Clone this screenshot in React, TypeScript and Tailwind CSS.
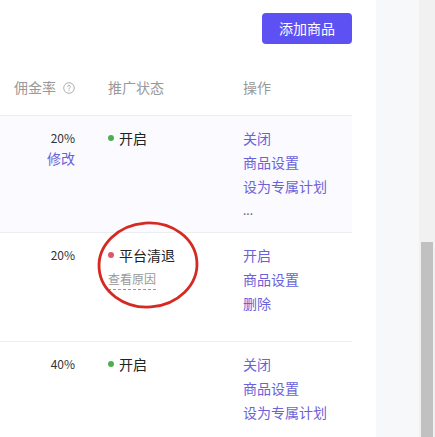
import React from 'react';

type Op = { label: string; muted?: boolean };

interface RowData {
  rate: string;
  editable?: boolean;
  status: 'on' | 'cleared';
  ops: Op[];
  highlight?: boolean;
  minH: string;
}

const rows: RowData[] = [
  {
    rate: '20%',
    editable: true,
    status: 'on',
    highlight: true,
    minH: 'min-h-[116px]',
    ops: [{ label: '关闭' }, { label: '商品设置' }, { label: '设为专属计划' }, { label: '...', muted: true }],
  },
  {
    rate: '20%',
    status: 'cleared',
    minH: 'min-h-[109px]',
    ops: [{ label: '开启' }, { label: '商品设置' }, { label: '删除' }],
  },
  {
    rate: '40%',
    status: 'on',
    minH: 'min-h-[109px]',
    ops: [{ label: '关闭' }, { label: '商品设置' }, { label: '设为专属计划' }],
  },
];

const HelpIcon = () => (
  <svg width="12" height="12" viewBox="0 0 12 12" className="ml-[7px] shrink-0">
    <circle cx="6" cy="6" r="5.3" fill="none" stroke="#a6a6a6" strokeWidth="0.9" />
    <path d="M4.6 4.7a1.4 1.4 0 1 1 1.9 1.3c-.4.2-.5.4-.5.8v.3" fill="none" stroke="#a6a6a6" strokeWidth="0.9" strokeLinecap="round" />
    <circle cx="6" cy="8.7" r="0.55" fill="#a6a6a6" />
  </svg>
);

const StatusCell = ({ status }: { status: RowData['status'] }) =>
  status === 'on' ? (
    <div className="flex items-center h-[24px] text-[14px] text-[#222]">
      <span className="w-[6px] h-[6px] rounded-full bg-[#4caf50] mr-[5px]" />
      开启
    </div>
  ) : (
    <div className="flex flex-col">
      <div className="flex items-center h-[24px] text-[14px] text-[#222]">
        <span className="w-[6px] h-[6px] rounded-full bg-[#e05668] mr-[5px]" />
        平台清退
      </div>
      <div className="h-[24px] pt-[2px] flex items-start">
        <span className="text-[12px] leading-[20px] text-[#999] border-b border-dashed border-[#999]">查看原因</span>
      </div>
    </div>
  );

export default function App() {
  return (
    <div
      className="flex w-[435px] h-[437px] overflow-hidden bg-white"
      style={{ fontFamily: '"Noto Sans CJK SC", "Noto Sans", sans-serif' }}
    >
      {/* Main white content */}
      <div className="w-[376px] shrink-0 bg-white pr-[24px] pt-[13px] relative">
        <div className="flex justify-end">
          <button className="w-[90px] h-[31px] rounded-[4px] bg-[#5e51f4] text-white text-[14px]">添加商品</button>
        </div>

        {/* Table header */}
        <div className="flex items-center h-[56px] mt-[16px] border-b border-[#ebedf0] text-[14px] text-[#999]">
          <div className="w-[92px] pr-[17px] flex items-center justify-end">
            佣金率
            <HelpIcon />
          </div>
          <div className="w-[135px] pl-[16px]">推广状态</div>
          <div className="pl-[16px]">操作</div>
        </div>

        {/* Table body */}
        {rows.map((row, i) => (
          <div
            key={i}
            className={`flex items-start border-b border-[#ebedf0] pt-[10px] pb-[10px] ${row.minH} ${row.highlight ? 'bg-[#fafaff]' : 'bg-white'}`}
          >
            <div className="w-[92px] pr-[17px] pt-[2px] flex flex-col items-end leading-[20px]">
              <span className="text-[12px] text-[#333]">{row.rate}</span>
              {row.editable && <span className="text-[14px] text-[#6a62d9]">修改</span>}
            </div>
            <div className="w-[135px] pl-[16px]">
              <StatusCell status={row.status} />
            </div>
            <div className="pl-[16px] flex flex-col text-[14px] leading-[24px]">
              {row.ops.map((op) => (
                <span key={op.label} className={op.muted ? 'text-[#666] text-[12px]' : 'text-[#6a62d9]'}>
                  {op.label}
                </span>
              ))}
            </div>
          </div>
        ))}

        {/* Red annotation circle */}
        <svg className="absolute left-[96px] top-[220px] pointer-events-none" width="104" height="90" viewBox="0 0 104 90">
          <ellipse cx="52" cy="45" rx="49" ry="42" fill="none" stroke="#d42a22" strokeWidth="2.8" transform="rotate(-4 52 45)" />
        </svg>
      </div>

      {/* Gray side area */}
      <div className="flex-1 bg-[#f7f8fa]" />

      {/* Scrollbar */}
      <div className="w-[16px] shrink-0 bg-[#f1f1f1] flex flex-col">
        <div className="h-[242px]" />
        <div className="flex-1 mx-[2px] bg-[#c1c1c1]" />
      </div>
    </div>
  );
}
